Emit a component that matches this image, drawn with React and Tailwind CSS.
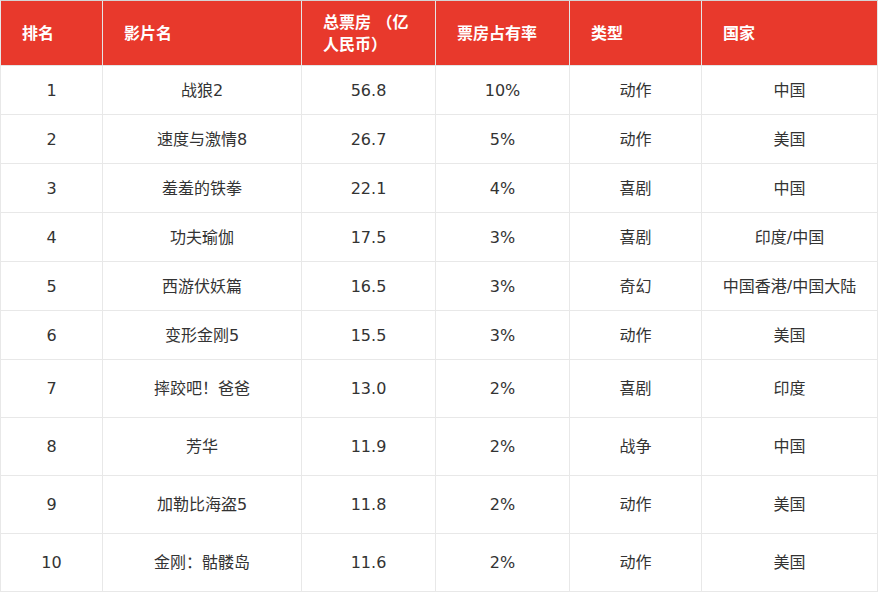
const columns = [
  { key: "rank", label: "排名", width: "w-[102px]" },
  { key: "name", label: "影片名", width: "w-[199px]" },
  { key: "box", label: "总票房 （亿人民币）", width: "w-[134px]" },
  { key: "share", label: "票房占有率", width: "w-[134px]" },
  { key: "genre", label: "类型", width: "w-[132px]" },
  { key: "country", label: "国家", width: "w-[176px]" },
];

const movies = [
  { rank: 1, name: "战狼2", box: "56.8", share: "10%", genre: "动作", country: "中国" },
  { rank: 2, name: "速度与激情8", box: "26.7", share: "5%", genre: "动作", country: "美国" },
  { rank: 3, name: "羞羞的铁拳", box: "22.1", share: "4%", genre: "喜剧", country: "中国" },
  { rank: 4, name: "功夫瑜伽", box: "17.5", share: "3%", genre: "喜剧", country: "印度/中国" },
  { rank: 5, name: "西游伏妖篇", box: "16.5", share: "3%", genre: "奇幻", country: "中国香港/中国大陆" },
  { rank: 6, name: "变形金刚5", box: "15.5", share: "3%", genre: "动作", country: "美国" },
  { rank: 7, name: "摔跤吧！爸爸", box: "13.0", share: "2%", genre: "喜剧", country: "印度" },
  { rank: 8, name: "芳华", box: "11.9", share: "2%", genre: "战争", country: "中国" },
  { rank: 9, name: "加勒比海盗5", box: "11.8", share: "2%", genre: "动作", country: "美国" },
  { rank: 10, name: "金刚：骷髅岛", box: "11.6", share: "2%", genre: "动作", country: "美国" },
];

export default function App() {
  return (
    <div className="w-[878px] border-l border-t border-l-[#e8e8e8] border-t-[#d4d4d4] bg-white text-[16px] font-['DejaVu_Sans','Noto_Sans_CJK_SC',sans-serif]">
      {/* HEADER */}
      <div className="flex h-[65px] bg-[#e8392c]">
        {columns.map((col) => (
          <div
            key={col.key}
            className={`${col.width} flex shrink-0 items-center border-b border-r border-[#e4e4e4] px-[21px] pt-px font-bold leading-[22px] text-white`}
          >
            {col.key === "box" ? (
              <span>
                总票房 （亿
                <br />
                人民币）
              </span>
            ) : (
              col.label
            )}
          </div>
        ))}
      </div>

      {/* BODY */}
      {movies.map((movie) => (
        <div
          key={movie.rank}
          className={`flex ${movie.rank > 6 ? "h-[58px]" : "h-[49px]"}`}
        >
          {columns.map((col) => (
            <div
              key={col.key}
              className={`${col.width} flex shrink-0 items-center justify-center border-b border-r border-[#e8e8e8] pt-px leading-[22px] text-[#333333]`}
            >
              {movie[col.key]}
            </div>
          ))}
        </div>
      ))}
    </div>
  );
}
